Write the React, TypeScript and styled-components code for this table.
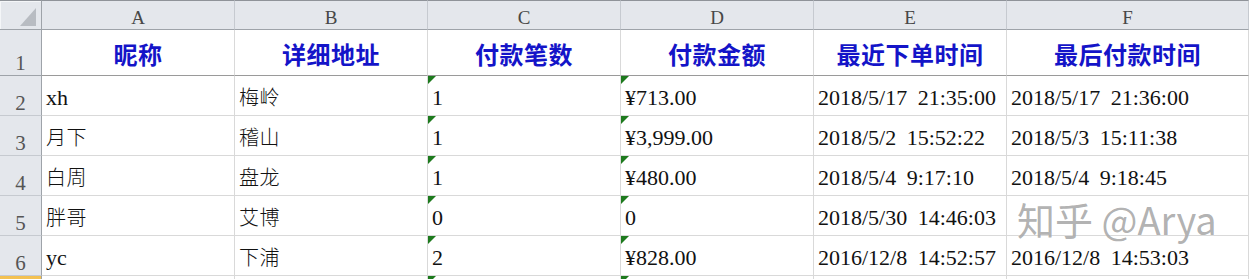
import React from "react";
import styled, { createGlobalStyle, css } from "styled-components";

const Global = createGlobalStyle`
  html, body { margin: 0; padding: 0; background: #ffffff; }
  body { overflow: hidden; }
`;

const Wrap = styled.div`
  position: relative;
  width: 1249px;
  height: 279px;
  overflow: hidden;
  background: #ffffff;
`;

const Grid = styled.div`
  display: grid;
  grid-template-columns: 42px repeat(5, 193px) 1fr;
  grid-template-rows: 30px 46px repeat(6, 40px);
`;

const headerBg = "#e4e7ec";

const Corner = styled.div`
  position: relative;
  box-sizing: border-box;
  background: ${headerBg};
  border-top: 1px solid #8f9399;
  border-bottom: 1px solid #9ea3a9;
  border-right: 1px solid #9ea3a9;
  box-shadow: inset 1px 1px 0 #f4f6f8;
  &::after {
    content: "";
    position: absolute;
    right: 5px;
    bottom: 3px;
    width: 16px;
    height: 18px;
    background: #b8bcc2;
    clip-path: polygon(100% 0, 100% 100%, 0 100%);
  }
`;

const ColHeader = styled.div`
  box-sizing: border-box;
  background: ${headerBg};
  border-top: 1px solid #8f9399;
  border-bottom: 1px solid #9ea3a9;
  border-right: 1px solid #c6cad0;
  display: flex;
  align-items: flex-end;
  justify-content: center;
  padding-bottom: 2px;
  font-family: "Liberation Serif", serif;
  font-size: 19px;
  line-height: 1;
  color: #474747;
`;

const RowHeader = styled.div<{ $active?: boolean; $strong?: boolean }>`
  box-sizing: border-box;
  background: ${headerBg};
  border-right: 1px solid #9ea3a9;
  border-bottom: 1px solid ${(p) => (p.$strong ? "#9ea3a9" : "#c6cad0")};
  display: flex;
  align-items: flex-end;
  justify-content: center;
  padding-bottom: 1px;
  font-family: "Liberation Serif", serif;
  font-size: 21px;
  line-height: 1;
  color: #555555;
  ${(p) =>
    p.$active &&
    css`
      background: linear-gradient(#f3c04f, #f8d98c);
      border-bottom-color: #e0a83a;
    `}
`;

const HeadCell = styled.div`
  box-sizing: border-box;
  border-right: 1px solid #d9d9d9;
  border-bottom: 1px solid #9a9a9a;
  display: flex;
  align-items: center;
  justify-content: center;
  padding-top: 3px;
  font-family: "Noto Sans CJK SC", sans-serif;
  font-weight: 700;
  font-size: 24px;
  letter-spacing: 0.5px;
  line-height: 1;
  color: #1414c8;
  white-space: nowrap;
`;

const Cell = styled.div<{ $flag?: boolean; $cjk?: boolean }>`
  position: relative;
  box-sizing: border-box;
  border-right: 1px solid #d9d9d9;
  border-bottom: 1px solid #d9d9d9;
  display: flex;
  align-items: flex-end;
  padding: 0 0 ${(p) => (p.$cjk ? "7px" : "6px")} 4px;
  overflow: hidden;
  white-space: nowrap;
  font-family: "Liberation Serif", "Noto Sans CJK SC", serif;
  font-size: ${(p) => (p.$cjk ? "20px" : "22px")};
  font-weight: ${(p) => (p.$cjk ? 300 : 400)};
  letter-spacing: ${(p) => (p.$cjk ? "0.5px" : "0")};
  word-spacing: 5px;
  line-height: 1;
  color: #111111;
  ${(p) =>
    p.$flag &&
    css`
      &::before {
        content: "";
        position: absolute;
        top: 0;
        left: 0;
        width: 8px;
        height: 8px;
        background: #1d7a1d;
        clip-path: polygon(0 0, 100% 0, 0 100%);
      }
    `}
`;

const Watermark = styled.div`
  position: absolute;
  left: 1017px;
  top: 200px;
  font-family: "Noto Sans CJK SC", sans-serif;
  font-size: 38px;
  line-height: 1;
  white-space: nowrap;
  color: rgba(128, 128, 128, 0.62);
  text-shadow: 0 0 1px rgba(255, 255, 255, 0.8);
  pointer-events: none;
`;

const columns = ["A", "B", "C", "D", "E", "F"];
const headers = ["昵称", "详细地址", "付款笔数", "付款金额", "最近下单时间", "最后付款时间"];
const rows: string[][] = [
  ["xh", "梅岭", "1", "¥713.00", "2018/5/17 21:35:00", "2018/5/17 21:36:00"],
  ["月下", "稽山", "1", "¥3,999.00", "2018/5/2 15:52:22", "2018/5/3 15:11:38"],
  ["白周", "盘龙", "1", "¥480.00", "2018/5/4 9:17:10", "2018/5/4 9:18:45"],
  ["胖哥", "艾博", "0", "0", "2018/5/30 14:46:03", ""],
  ["yc", "下浦", "2", "¥828.00", "2016/12/8 14:52:57", "2016/12/8 14:53:03"],
];

const isCjk = (s: string) => /[\u4e00-\u9fff]/.test(s);

export default function App() {
  return (
    <Wrap>
      <Global />
      <Grid>
        <Corner />
        {columns.map((c) => (
          <ColHeader key={c}>{c}</ColHeader>
        ))}
        <RowHeader $strong>1</RowHeader>
        {headers.map((h) => (
          <HeadCell key={h}>{h}</HeadCell>
        ))}
        {rows.map((r, i) => (
          <React.Fragment key={i}>
            <RowHeader>{i + 2}</RowHeader>
            {r.map((v, j) => (
              <Cell key={j} $flag={j === 2 || j === 3} $cjk={isCjk(v)}>
                {v}
              </Cell>
            ))}
          </React.Fragment>
        ))}
        <RowHeader $active />
        {columns.map((c, j) => (
          <Cell key={c} $flag={j === 2 || j === 3} />
        ))}
      </Grid>
      <Watermark>知乎 @Arya</Watermark>
    </Wrap>
  );
}
